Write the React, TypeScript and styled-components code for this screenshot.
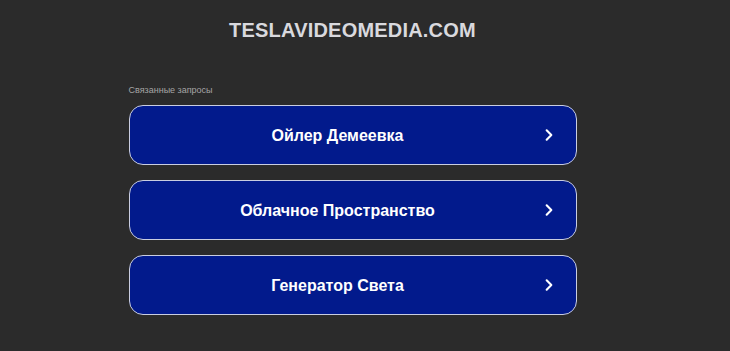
import styled, { createGlobalStyle } from 'styled-components'

const GlobalStyle = createGlobalStyle`
  html, body {
    margin: 0;
    padding: 0;
    background: #2b2b2b;
    font-family: Arial, "Liberation Sans", sans-serif;
  }
`

const links = ['Ойлер Демеевка', 'Облачное Пространство', 'Генератор Света']

export default function App() {
  return (
    <>
      <GlobalStyle />
      <Page>
        <Domain>TESLAVIDEOMEDIA.COM</Domain>
        <Related>
          <Caption>Связанные запросы</Caption>
          <List>
            {links.map(text => (
              <LinkButton key={text}>
                <span>{text}</span>
                <Chevron viewBox="0 0 12 12">
                  <path d="M4 2 L8 6 L4 10" />
                </Chevron>
              </LinkButton>
            ))}
          </List>
        </Related>
      </Page>
    </>
  )
}

const Page = styled.div`
  width: 705px;
  height: 351px;
  display: flex;
  flex-direction: column;
  align-items: center;
  box-sizing: border-box;
  padding-top: 19px;
`
const Domain = styled.h1`
  margin: 0;
  font-size: 20px;
  line-height: 23px;
  font-weight: 700;
  color: #d9d9de;
  letter-spacing: 0.2px;
`
const Related = styled.div`
  width: 448px;
  margin-top: 42px;
`
const Caption = styled.div`
  font-size: 9px;
  line-height: 12px;
  color: #a5a5a5;
  margin-bottom: 9px;
`
const List = styled.div`
  display: flex;
  flex-direction: column;
  gap: 15px;
`
const LinkButton = styled.a`
  position: relative;
  height: 60px;
  box-sizing: border-box;
  display: flex;
  align-items: center;
  justify-content: center;
  padding: 2px 30px 0 0;
  background: #021a8c;
  border: 1.5px solid #c9cde0;
  border-radius: 14px;
  color: #ffffff;
  font-size: 16px;
  font-weight: 700;
  cursor: pointer;
`
const Chevron = styled.svg`
  position: absolute;
  right: 20px;
  top: 50%;
  width: 14px;
  height: 14px;
  margin-top: -7px;
  fill: none;
  stroke: #ffffff;
  stroke-width: 1.8;
  stroke-linecap: round;
  stroke-linejoin: round;
`
